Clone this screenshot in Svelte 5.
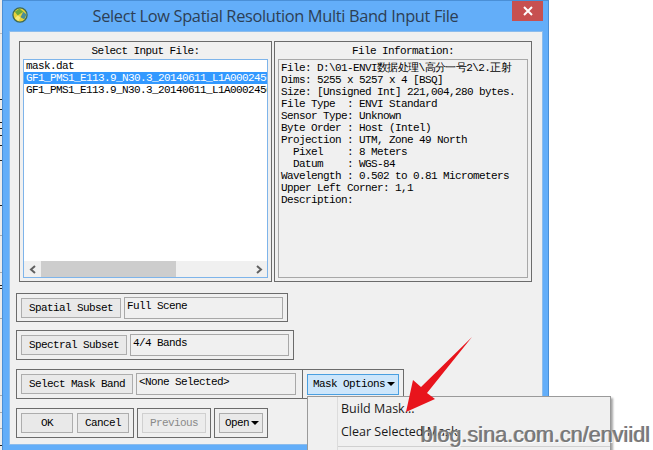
<script>
	const files = [
		{ name: 'mask.dat' },
		{ name: 'GF1_PMS1_E113.9_N30.3_20140611_L1A00024566', selected: true },
		{ name: 'GF1_PMS1_E113.9_N30.3_20140611_L1A00024566' }
	];

	const info = [
		'File: D:\\01-ENVI数据处理\\高分一号2\\2.正射',
		'Dims: 5255 x 5257 x 4 [BSQ]',
		'Size: [Unsigned Int] 221,004,280 bytes.',
		'File Type  : ENVI Standard',
		'Sensor Type: Unknown',
		'Byte Order : Host (Intel)',
		'Projection : UTM, Zone 49 North',
		'  Pixel    : 8 Meters',
		'  Datum    : WGS-84',
		'Wavelength : 0.502 to 0.81 Micrometers',
		'Upper Left Corner: 1,1',
		'Description:'
	];

	// bits of the window behind, visible left of the dialog
	const behind = [
		{ y: 33, c: '#bbb' }, { y: 99, c: '#222' }, { y: 109, c: '#222' }, { y: 122, c: '#222' },
		{ y: 128, c: '#222' }, { y: 135, c: '#222' }, { y: 145, c: '#222' }, { y: 160, c: '#222' },
		{ y: 205, c: '#222' }, { y: 235, c: '#aaa' }, { y: 272, c: '#aaa' }, { y: 285, c: '#222' },
		{ y: 288, c: '#222' }, { y: 318, c: '#aaa' }, { y: 395, c: '#aaa' }, { y: 412, c: '#aaa' },
		{ y: 428, c: '#aaa' }, { y: 445, c: '#222' }
	];
</script>

<div class="screen">
	<svg class="behind" width="2" height="450">
		{#each behind as b}
			<rect x="0" y={b.y} width="2" height="1" fill={b.c} />
		{/each}
	</svg>

	<div class="window">
		<header class="titlebar">
			<svg class="logo" width="16" height="16" viewBox="0 0 17 17">
				<circle cx="8.5" cy="8.5" r="7.5" fill="#e8d23c" stroke="#3f6a52" stroke-width="1.4" />
				<path d="M3 5 L8 1.5 L12 5 L6 9 Z" fill="#6aa83f" />
				<path d="M12 5 L15.5 8 L13 13 L9 11 Z" fill="#4a8e96" />
				<path d="M6 9 L9 11 L7 15 L3 12 Z" fill="#f6ea7a" />
			</svg>
			<h1>Select Low Spatial Resolution Multi Band Input File</h1>
			<button class="close" aria-label="Close">
				<svg width="10" height="10" viewBox="0 0 10 10">
					<path d="M1 1 L9 9 M9 1 L1 9" stroke="#fff" stroke-width="2" />
				</svg>
			</button>
		</header>

		<div class="content">
			<div class="panels">
				<section class="panel left">
					<div class="caption">Select Input File:</div>
					<div class="listbox">
						<ul>
							{#each files as file}
								<li class:selected={file.selected}>{file.name}</li>
							{/each}
						</ul>
						<div class="scrollbar">
							<span class="chev">
								<svg width="8" height="9" viewBox="0 0 8 9"><path d="M6 1 L2 4.5 L6 8" fill="none" stroke="#606060" stroke-width="2" /></svg>
							</span>
							<div class="track"><div class="thumb"></div></div>
							<span class="chev">
								<svg width="8" height="9" viewBox="0 0 8 9"><path d="M2 1 L6 4.5 L2 8" fill="none" stroke="#606060" stroke-width="2" /></svg>
							</span>
						</div>
					</div>
				</section>
				<section class="panel right">
					<div class="caption">File Information:</div>
					<div class="infobox">
						{#each info as line}
							<div class="line">{line}</div>
						{/each}
					</div>
				</section>
			</div>

			<div class="group row spatial">
				<button class="btn">Spatial Subset</button>
				<div class="field">Full Scene</div>
			</div>

			<div class="group row spectral">
				<button class="btn">Spectral Subset</button>
				<div class="field">4/4 Bands</div>
			</div>

			<div class="maskrow">
				<div class="group row mask">
					<button class="btn">Select Mask Band</button>
					<div class="field">&lt;None Selected&gt;</div>
				</div>
				<div class="group row options">
					<button class="btn active drop">Mask Options<i class="caret"></i></button>
				</div>
			</div>

			<div class="actions">
				<div class="group row ok-group">
					<button class="btn ok">OK</button>
					<button class="btn cancel">Cancel</button>
				</div>
				<div class="group row">
					<button class="btn disabled">Previous</button>
				</div>
				<div class="group row">
					<button class="btn drop">Open<i class="caret"></i></button>
				</div>
			</div>
		</div>
	</div>

	<div class="menu">
		<div class="item">Build Mask...</div>
		<div class="item">Clear Selected Mask</div>
		<div class="sep"></div>
	</div>

	<svg class="arrow" width="70" height="80" viewBox="0 0 70 80">
		<path d="M67 1 L22 57 L30 63 L1 76 L8 44 L16 51 Z" fill="#e8141c" />
	</svg>

	<div class="watermark">blog.sina.com.cn/enviidl</div>
</div>

<style>
	:global(body) {
		margin: 0;
		background: #fff;
	}

	.screen {
		position: relative;
		width: 653px;
		height: 450px;
		overflow: hidden;
		background: #fff;
		font-family: "Liberation Mono", monospace;
		font-size: 11px;
		letter-spacing: -0.6px;
		color: #000;
	}

	.behind {
		position: absolute;
		left: 0;
		top: 0;
		background: #ececec;
	}

	.window {
		box-sizing: border-box;
		width: 547px;
		height: 456px;
		margin-left: 2px;
		background: #63aef9;
		border: 1px solid #4a8fd6;
		border-bottom: none;
		padding: 0 5px 6px 6px;
	}

	.titlebar {
		display: flex;
		align-items: center;
		height: 30px;
		position: relative;
	}

	.logo {
		margin-left: 3px;
		margin-top: -2px;
	}

	h1 {
		margin: 0;
		flex: 1;
		font: 400 16.4px "Open Sans", sans-serif;
		letter-spacing: -0.35px;
		color: #2d3f55;
		text-align: center;
		padding-right: 20px;
		margin-top: -1px;
		white-space: nowrap;
	}

	.close {
		position: absolute;
		right: 0;
		top: 0;
		width: 31px;
		height: 20px;
		padding: 0;
		border: none;
		background: #c75050;
		display: flex;
		align-items: center;
		justify-content: center;
	}

	.content {
		box-sizing: border-box;
		height: 414px;
		background: #f0f0f0;
		border: 1px solid #8cbcec;
		padding: 9px 9px 0 6px;
	}

	.panels {
		display: flex;
		gap: 2px;
		margin-left: 3px;
	}

	.panel {
		box-sizing: border-box;
		height: 241px;
		border: 1px solid #6b6b6b;
		display: flex;
		flex-direction: column;
		padding: 0 3px 3px;
	}

	.left {
		width: 253px;
	}

	.right {
		width: 258px;
	}

	.caption {
		text-align: center;
		height: 17px;
		line-height: 19px;
	}

	.listbox {
		flex: 1;
		border: 1px solid #7eb4ea;
		background: #fff;
		display: flex;
		flex-direction: column;
		min-height: 0;
	}

	ul {
		flex: 1;
		margin: 0;
		padding: 0;
		list-style: none;
		overflow: hidden;
	}

	li {
		height: 12px;
		line-height: 12px;
		padding-left: 2px;
		white-space: nowrap;
	}

	li.selected {
		background: #3399ff;
		color: #fff;
	}

	.scrollbar {
		display: flex;
		align-items: center;
		height: 16px;
		background: #f0f0f0;
	}

	.chev {
		display: flex;
		justify-content: center;
		width: 17px;
	}

	.track {
		flex: 1;
		height: 100%;
	}

	.thumb {
		width: 135px;
		height: 100%;
		background: #cdcdcd;
	}

	.infobox {
		flex: 1;
		border: 1px solid #a8a8a8;
		padding: 2px 2px;
		overflow: hidden;
	}

	.line {
		height: 12px;
		line-height: 12px;
		white-space: pre;
	}

	.group {
		box-sizing: border-box;
		border: 1px solid #6b6b6b;
		height: 29px;
	}

	.row {
		display: flex;
		align-items: center;
		gap: 3px;
		padding: 0 4px;
	}

	.spatial {
		width: 272px;
		margin-top: 11px;
	}

	.spectral {
		width: 278px;
		margin-top: 8px;
		height: 30px;
	}

	.maskrow {
		display: flex;
		margin-top: 9px;
	}

	.mask {
		width: 287px;
		height: 30px;
	}

	.options {
		width: 102px;
		height: 30px;
		margin-left: -1px;
	}

	.actions {
		display: flex;
		gap: 3px;
		margin-top: 9px;
	}

	.actions .group {
		height: 30px;
	}

	.ok-group {
		gap: 4px;
	}

	.btn {
		box-sizing: border-box;
		height: 20px;
		padding: 0 7px;
		border: 1px solid #adadad;
		background: #e9e9e9;
		font: inherit;
		letter-spacing: inherit;
		color: #000;
		white-space: nowrap;
		display: flex;
		align-items: center;
	}

	.ok,
	.cancel {
		width: 52px;
		justify-content: center;
		padding: 0;
	}

	.drop {
		padding: 0 3px 0 5px;
	}

	.field {
		box-sizing: border-box;
		width: 160px;
		height: 22px;
		border: 1px solid #a8a8a8;
		padding: 2px 2px 0;
		line-height: 13px;
	}

	.active {
		background: #cde6fb;
		border-color: #4a9fe0;
		height: 21px;
	}

	.disabled {
		color: #8a8a8a;
		border-color: #d0d0d0;
		background: #ececec;
	}

	.caret {
		display: inline-block;
		width: 0;
		height: 0;
		margin-left: 2px;
		border-left: 4px solid transparent;
		border-right: 4px solid transparent;
		border-top: 4px solid #000;
	}

	.menu {
		position: absolute;
		left: 307px;
		top: 396px;
		width: 304px;
		height: 70px;
		box-sizing: border-box;
		background: #f0f0f0;
		border: 1px solid #9a9a9a;
		box-shadow: 2px 2px 2px rgba(0, 0, 0, 0.35);
		padding-top: 1px;
		font: 400 12.5px "Open Sans", sans-serif;
		letter-spacing: 0;
		color: #1a1a1a;
	}

	.menu::before {
		content: "";
		position: absolute;
		left: 29px;
		top: 0;
		bottom: 0;
		width: 1px;
		background: #dcdcdc;
	}

	.item {
		height: 23px;
		line-height: 22px;
		padding-left: 33px;
	}

	.sep {
		height: 1px;
		margin: 2px 0 0 30px;
		background: #d0d0d0;
	}

	.arrow {
		position: absolute;
		left: 405px;
		top: 336px;
	}

	.watermark {
		position: absolute;
		left: 421px;
		top: 422px;
		font: 400 21.6px "Liberation Sans", sans-serif;
		letter-spacing: 0;
		color: #777;
		text-shadow: 1px 1px 0 rgba(255, 255, 255, 0.85), -1px 0 0 rgba(60, 60, 60, 0.55);
		white-space: nowrap;
	}
</style>
